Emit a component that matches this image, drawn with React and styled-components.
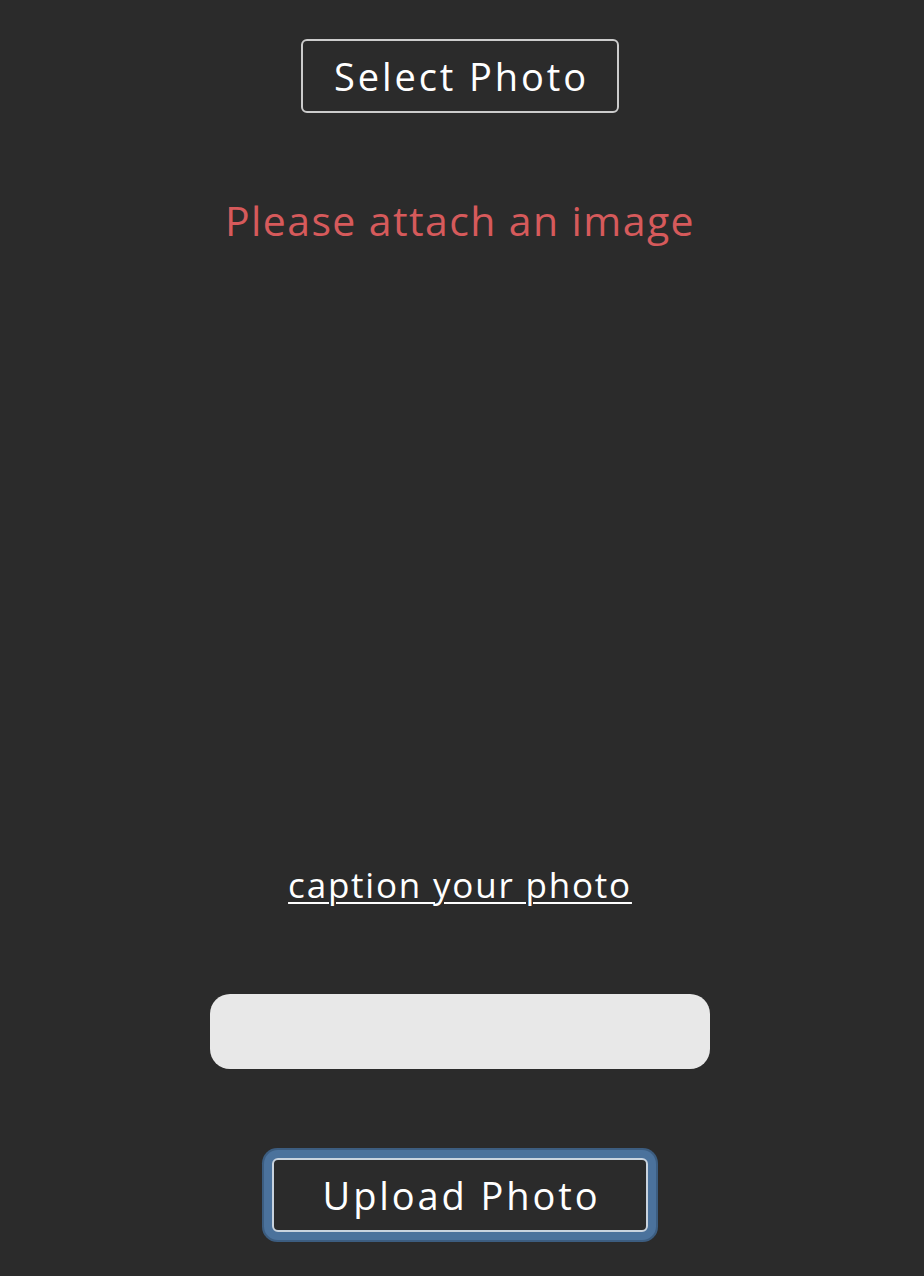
import React from 'react';
import styled, { createGlobalStyle } from 'styled-components';

const GlobalStyle = createGlobalStyle`
    body {
        margin: 0;
        background-color: #2b2b2b;
        font-family: 'Open Sans', 'Noto Sans', sans-serif;
        color: #ffffff;
    }`

const Page = styled.div`
    display: flex;
    flex-direction: column;
    align-items: center;
    min-height: 1276px;
    box-sizing: border-box;
    padding: 39px 4px 0 0;`

const Button = styled.button`
    font-family: inherit;
    font-size: 38px;
    color: #ffffff;
    background-color: #2b2b2b;
    border: 2px solid ${props => props.focused ? '#c9d3de' : '#cccccc'};
    border-radius: 6px;
    width: ${props => props.width}px;
    height: ${props => props.height}px;
    padding: 0 0 0 3px;
    cursor: pointer;
    letter-spacing: 2.9px;
    box-shadow: ${props => props.focused
        ? '0 0 0 8px #4b729c, 0 0 0 10px #3c5d80'
        : 'none'};`

const ErrorText = styled.p`
    margin: 79px 0 0;
    font-size: 41px;
    line-height: 56px;
    color: #d65a5b;
    letter-spacing: 1.4px;`

const Preview = styled.div`
    width: 500px;
    height: 613px;`

const CaptionLabel = styled.label`
    font-size: 35px;
    line-height: 48px;
    text-decoration: underline;
    text-decoration-thickness: 2px;
    text-underline-offset: 4px;
    letter-spacing: 1.8px;`

const CaptionInput = styled.input`
    margin-top: 85px;
    width: 500px;
    height: 75px;
    box-sizing: border-box;
    border: none;
    border-radius: 20px;
    background-color: #e8e8e8;
    outline: none;
    padding: 0 20px;
    font-family: inherit;
    font-size: 24px;`

const UploadRow = styled.div`
    margin-top: 89px;`

export default function App() {
    return (
        <Page>
            <GlobalStyle />
            <Button width={318} height={74}>Select Photo</Button>
            <ErrorText>Please attach an image</ErrorText>
            <Preview />
            <CaptionLabel htmlFor='caption'>caption your photo</CaptionLabel>
            <CaptionInput id='caption' type='text' />
            <UploadRow>
                <Button focused width={376} height={74}>Upload Photo</Button>
            </UploadRow>
        </Page>
    );
}
